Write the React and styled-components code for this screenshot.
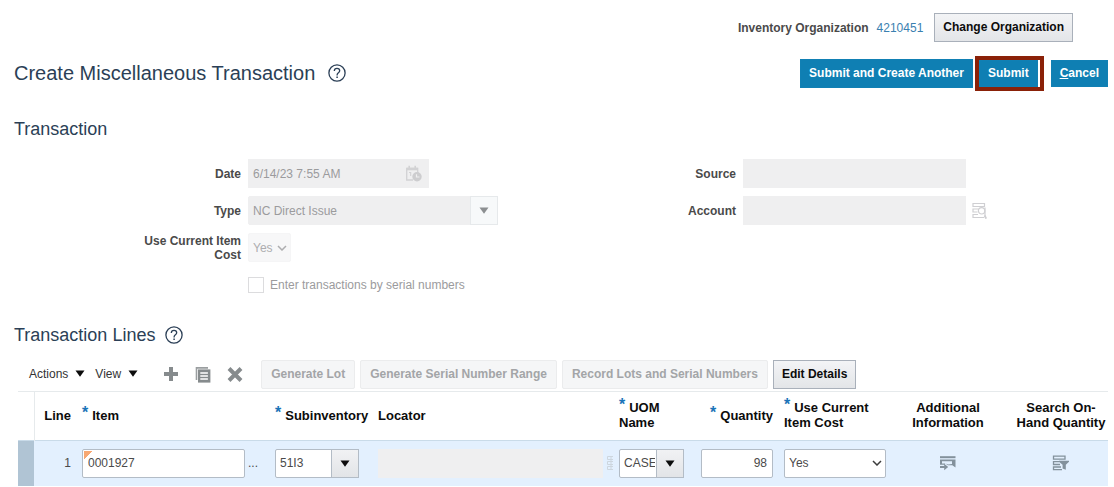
import React from "react";
import styled, { createGlobalStyle } from "styled-components";

const GlobalStyle = createGlobalStyle`
  *, *::before, *::after { box-sizing: border-box; }
  body { margin: 0; background: #fff; }
  body, button, input, select {
    font-family: "Liberation Sans", Arial, sans-serif;
    font-size: 12px;
    color: #4a4a4a;
  }
  h1, h2 { margin: 0; font-weight: 400; color: #2b3f56; }
`;

const Page = styled.main`
  padding: 13px 6px 0 14px;
`;

const OrgBar = styled.div`
  display: flex;
  justify-content: flex-end;
  align-items: center;
  padding-right: 35px;
  height: 29px;
`;

const OrgLabel = styled.span`
  font-weight: 700;
`;

const OrgLink = styled.a`
  margin: 0 11px 0 8px;
  color: #3a80b0;
  text-decoration: none;
`;

const Button = styled.button`
  height: 29px;
  padding: 0 ${(p) => (p.disabled ? "9px" : "8px")} 2px;
  border: 1px solid ${(p) => (p.disabled ? "#ebeced" : "#a9b0ba")};
  border-radius: ${(p) => (p.disabled ? "2px" : "0")};
  background: ${(p) => (p.disabled ? "#f5f6f7" : "linear-gradient(#f3f4f6, #e3e5e8)")};
  color: ${(p) => (p.disabled ? "#a3a5a7" : "#0c0c0c")};
  font-weight: 700;
  white-space: nowrap;
`;

const TitleBar = styled.header`
  display: flex;
  justify-content: space-between;
  align-items: center;
  height: 36px;
  margin-top: 13px;
`;

const Heading = styled.div`
  display: flex;
  align-items: center;
  gap: ${(p) => (p.$section ? "10px" : "13px")};
  height: 24px;

  h1 { font-size: 20px; }
  h2 { font-size: 18px; }
`;

const HelpButton = styled.button`
  display: flex;
  padding: 0;
  border: 0;
  background: none;
`;

const TitleActions = styled.div`
  display: flex;
  align-items: center;
`;

const PrimaryButton = styled.button`
  height: ${(p) => (p.$compact ? "27px" : "29px")};
  padding: 0 8px;
  border: 1px solid #1180b4;
  background: #0f7fb3;
  color: #fff;
  font-weight: 700;
  white-space: nowrap;
`;

const Highlight = styled.div`
  display: flex;
  margin: 0 7px 0 2px;
  padding-right: 2px;
  border: 4px solid #8a2108;
`;

const Form = styled.form`
  display: grid;
  grid-template-columns: 1fr 1fr;
  padding-right: 104px;
  margin-top: 18px;
`;

const FieldColumn = styled.div`
  display: flex;
  flex-direction: column;
  gap: 8px;
`;

const Field = styled.div`
  display: grid;
  grid-template-columns: 227px 1fr;
  column-gap: 7px;
  align-items: center;
  min-height: 29px;
`;

const FieldLabel = styled.label`
  justify-self: end;
  max-width: 102px;
  font-weight: 700;
  line-height: 14px;
  text-align: right;
`;

const FieldBody = styled.div`
  display: flex;
  align-items: center;
  gap: 6px;
`;

const DisabledBox = styled.div`
  display: flex;
  align-items: center;
  width: ${(p) => p.$width};
  height: 29px;
  padding-right: 6px;
  background: #efeff0;
`;

const PlainInput = styled.input`
  flex: 1;
  min-width: 0;
  height: 29px;
  padding: 0 5px;
  border: 0;
  background: none;
  color: #9b9b9d;
`;

const SelectWrap = styled.div`
  display: inline-grid;
  width: ${(p) => p.$width};
  height: 29px;
  vertical-align: middle;

  > * { grid-area: 1 / 1; }
`;

const selectLook = {
  plain: { bg: "#fff", border: "#b3bcc6", ink: "#4a4a4a" },
  muted: { bg: "#efeff0", border: "#efeff0", ink: "#9b9b9d" },
  faint: { bg: "#f7f7f8", border: "#f5f5f6", ink: "#adadaf" },
};

const Select = styled.select`
  appearance: none;
  width: 100%;
  height: 29px;
  padding: 0 ${(p) => (p.$arrowBox ? "28px" : "16px")} 0 4px;
  border: 1px solid ${(p) => selectLook[p.$look].border};
  border-radius: 2px;
  background: ${(p) => selectLook[p.$look].bg};
  color: ${(p) => selectLook[p.$look].ink};
  opacity: 1;
`;

const ArrowBox = styled.span`
  display: flex;
  align-items: center;
  justify-content: center;
  justify-self: end;
  width: 28px;
  height: 29px;
  border: 1px solid ${(p) => (p.$muted ? "#e6e9eb" : "#b3bcc6")};
  background: ${(p) => (p.$muted ? "#f7f9fa" : "linear-gradient(#f1f2f4, #e2e4e7)")};
  pointer-events: none;
`;

const ChevronSlot = styled.span`
  display: flex;
  align-items: center;
  justify-self: end;
  padding-right: 4px;
  pointer-events: none;
`;

const CheckLabel = styled.label`
  display: flex;
  align-items: center;
  gap: 6px;
  grid-column: 2;
  color: #9b9b9d;
`;

const Checkbox = styled.input`
  appearance: none;
  width: 16px;
  height: 16px;
  margin: 0;
  border: 1px solid #dcdcde;
  background: #fff;
`;

const SectionHeading = styled(Heading)`
  margin-top: ${(p) => (p.$afterForm ? "24px" : "26px")};
`;

const Toolbar = styled.div`
  display: flex;
  align-items: center;
  height: 29px;
  margin: 13px 0 2px 15px;
`;

const MenuButton = styled.button`
  display: flex;
  align-items: center;
  gap: 7px;
  margin-right: 10px;
  padding: 0 0 2px;
  border: 0;
  background: none;
  color: #333;
`;

const IconTools = styled.div`
  display: flex;
  gap: 16px;
  margin: 0 18px 0 15px;
`;

const IconButton = styled.button`
  display: inline-flex;
  padding: 0;
  border: 0;
  background: none;
  vertical-align: middle;
`;

const ToolbarButtons = styled.div`
  display: flex;
  gap: 5px;
`;

const LinesTable = styled.table`
  width: calc(100% - 4px);
  margin-left: 4px;
  border-collapse: collapse;
  table-layout: fixed;
`;

const Column = styled.col`
  width: ${(p) => p.$width};
`;

const HeadCell = styled.th`
  height: 49px;
  padding: 0 ${(p) => (p.$align === "right" ? "5px" : "0")} 2px ${(p) => (p.$inset || "6px")};
  border-top: 1px solid #e6eaec;
  border-left: ${(p) => (p.$divider ? "1px solid #e6eaec" : "0")};
  color: #0c0c0c;
  font-size: 13px;
  line-height: 15px;
  text-align: ${(p) => p.$align || "left"};
`;

const Required = styled.span`
  margin-right: 4px;
  color: #1b74b8;
  font-size: 16px;
  line-height: 0;
  vertical-align: 2px;
`;

const Cell = styled.td`
  height: 45px;
  padding: 0 ${(p) => (p.$align === "right" ? "5px" : "0")} 0 ${(p) => (p.$inset || "6px")};
  border-top: 1px solid #c9dbe9;
  background: ${(p) => (p.$handle ? "#b0c4d4" : "#e3f0fe")};
  text-align: ${(p) => p.$align || "left"};
  white-space: nowrap;
`;

const CellContent = styled.div`
  display: flex;
  align-items: center;
  gap: 3px;
`;

const CellInput = styled.input`
  width: ${(p) => p.$width};
  height: 29px;
  padding: 0 5px;
  border: 1px solid #b3bcc6;
  border-radius: 2px;
  background: ${(p) =>
    p.$changed ? "linear-gradient(135deg, #f7a873 6px, transparent 6px) 1px 1px no-repeat, #fff" : "#fff"};
  text-align: ${(p) => (p.$number ? "right" : "left")};
`;

const LocatorInput = styled.input`
  flex: 1;
  min-width: 0;
  height: 29px;
  border: 0;
  background: #efeff0;
`;

function HelpIcon() {
  return (
    <svg width="18" height="18" viewBox="0 0 18 18" fill="none" stroke="#2b3f56" aria-hidden="true">
      <circle cx="9" cy="9" r="8.1" strokeWidth="1.3" />
      <path d="M6.3 7.1C6.3 5.4 7.4 4.4 9 4.4s2.7 1 2.7 2.4c0 2-2.6 2-2.6 4.1v.5" strokeWidth="1.3" />
      <path d="M9.1 12.5v1.5" strokeWidth="1.5" />
    </svg>
  );
}

function Triangle({ color = "#0c0c0c" }) {
  return (
    <svg width="10" height="7" viewBox="0 0 10 7" aria-hidden="true">
      <path d="M0.5 0.5h9L5 6.8z" fill={color} />
    </svg>
  );
}

function Chevron({ color }) {
  return (
    <svg width="10" height="6" viewBox="0 0 10 6" fill="none" stroke={color} strokeWidth="1.5" aria-hidden="true">
      <path d="M1 1l4 4 4-4" />
    </svg>
  );
}

function DateTimeIcon() {
  return (
    <svg width="18" height="18" viewBox="0 0 18 18" fill="none" stroke="#d2d2d4" aria-hidden="true">
      <path d="M8 15H1.7V3.5h11V8" strokeWidth="1.3" />
      <path d="M1.7 4h11" strokeWidth="2.6" />
      <path d="M4.2 0.8v3M10.2 0.8v3" strokeWidth="1.6" />
      <path d="M4 7.5h1.7V11" strokeWidth="1.1" />
      <circle cx="12" cy="11.8" r="4.7" fill="#cdcdcf" stroke="none" />
      <path d="M11.5 9.3V12h3" stroke="#efeff0" strokeWidth="1.2" />
    </svg>
  );
}

function LookupIcon() {
  return (
    <svg width="16" height="18" viewBox="0 0 16 18" fill="none" stroke="#cfcfd2" strokeWidth="1.2" aria-hidden="true">
      <path d="M1 1.5h11.5v3H1zM6.5 7H1v3h4.5M6 12.5H1v3h11" />
      <circle cx="9.6" cy="8.8" r="3.2" />
      <path d="M13 5.5v8.5" />
      <path d="M12.6 13.5l1.6 3.2" strokeWidth="1.9" />
    </svg>
  );
}

function ClippedLookupIcon() {
  return (
    <svg width="7" height="16" viewBox="0 0 7 16" fill="none" stroke="#cdd6de" aria-hidden="true">
      <path d="M7 1.5H1.5v3H7M7 6.5H1.5v3H7M7 11.5H1.5v3H7M5 1.5v13" />
    </svg>
  );
}

function AddIcon() {
  return (
    <svg width="16" height="16" viewBox="0 0 16 16" aria-hidden="true">
      <path d="M6 0h4v5h5v4h-5v5H6V9H1V5h5z" fill="#868b8d" />
    </svg>
  );
}

function DuplicateIcon() {
  return (
    <svg width="16" height="16" viewBox="0 0 16 16" aria-hidden="true">
      <path d="M1.5 13V0.9H13" fill="none" stroke="#9a9ea0" strokeWidth="1.6" />
      <path d="M3 2.4h12.4v13.2H3z" fill="#868b8d" />
      <path d="M5.3 6h7.6M5.3 9h7.6M5.3 12h7.6" stroke="#fff" strokeWidth="1.4" />
    </svg>
  );
}

function DeleteIcon() {
  return (
    <svg width="16" height="16" viewBox="0 0 16 16" aria-hidden="true">
      <path d="M2 1.5l12 12M14 1.5L2 13.5" stroke="#868b8d" strokeWidth="4" />
    </svg>
  );
}

function AdditionalInfoIcon() {
  return (
    <svg width="18" height="16" viewBox="0 0 18 16" fill="#83919c" aria-hidden="true">
      <path d="M1 1.2h15.5v2H1z" />
      <path fillRule="evenodd" d="M1 4.4h15.5v8.2l-3.2-2.3H9L6 8.2v1.6H1zM3 6.2v2.3h3.2l3.3 1 3.5-.6V6.2z" />
      <path d="M1 10.9h4.2V8.7L9.2 12l-4 3.3v-2.2H1z" />
    </svg>
  );
}

function SearchQuantityIcon() {
  return (
    <svg width="18" height="16" viewBox="0 0 18 16" fill="none" stroke="#83919c" strokeWidth="1.3" aria-hidden="true">
      <path d="M1.5 1.2h11.5v3H1.5zM7.5 6.7h-6v2.8h6.5M9 12H1.5v2.6H10" />
      <path d="M7 5.7h10v1.1l-3.2 3v5l-3.2-1.4V9.8L7 6.8z" fill="#83919c" stroke="none" />
    </svg>
  );
}

function BoxedSelect({ id, value, width, muted, label }) {
  return (
    <SelectWrap $width={width}>
      <Select id={id} aria-label={label} $arrowBox $look={muted ? "muted" : "plain"} disabled={muted}>
        <option>{value}</option>
      </Select>
      <ArrowBox $muted={muted}>
        <Triangle color={muted ? "#8c8f91" : "#0c0c0c"} />
      </ArrowBox>
    </SelectWrap>
  );
}

export default function App() {
  return (
    <>
      <GlobalStyle />
      <Page>
        <OrgBar>
          <OrgLabel>Inventory Organization</OrgLabel>
          <OrgLink href="#organization">4210451</OrgLink>
          <Button type="button">Change Organization</Button>
        </OrgBar>

        <TitleBar>
          <Heading>
            <h1>Create Miscellaneous Transaction</h1>
            <HelpButton type="button" aria-label="Help"><HelpIcon /></HelpButton>
          </Heading>
          <TitleActions>
            <PrimaryButton type="button">Submit and Create Another</PrimaryButton>
            <Highlight>
              <PrimaryButton type="button" $compact>Submit</PrimaryButton>
            </Highlight>
            <PrimaryButton type="button" $compact><u>C</u>ancel</PrimaryButton>
          </TitleActions>
        </TitleBar>

        <SectionHeading $section>
          <h2>Transaction</h2>
        </SectionHeading>

        <Form>
          <FieldColumn>
            <Field>
              <FieldLabel htmlFor="date">Date</FieldLabel>
              <DisabledBox $width="181px">
                <PlainInput id="date" defaultValue="6/14/23 7:55 AM" disabled />
                <DateTimeIcon />
              </DisabledBox>
            </Field>
            <Field>
              <FieldLabel htmlFor="type">Type</FieldLabel>
              <BoxedSelect id="type" value="NC Direct Issue" width="250px" muted />
            </Field>
            <Field>
              <FieldLabel htmlFor="cost">Use Current Item Cost</FieldLabel>
              <SelectWrap $width="43px">
                <Select id="cost" $look="faint" disabled>
                  <option>Yes</option>
                </Select>
                <ChevronSlot><Chevron color="#adadaf" /></ChevronSlot>
              </SelectWrap>
            </Field>
            <Field>
              <CheckLabel>
                <Checkbox type="checkbox" disabled />
                Enter transactions by serial numbers
              </CheckLabel>
            </Field>
          </FieldColumn>
          <FieldColumn>
            <Field>
              <FieldLabel htmlFor="source">Source</FieldLabel>
              <DisabledBox $width="223px">
                <PlainInput id="source" disabled />
              </DisabledBox>
            </Field>
            <Field>
              <FieldLabel htmlFor="account">Account</FieldLabel>
              <FieldBody>
                <DisabledBox $width="223px">
                  <PlainInput id="account" disabled />
                </DisabledBox>
                <LookupIcon />
              </FieldBody>
            </Field>
          </FieldColumn>
        </Form>

        <SectionHeading $section $afterForm>
          <h2>Transaction Lines</h2>
          <HelpButton type="button" aria-label="Help"><HelpIcon /></HelpButton>
        </SectionHeading>

        <Toolbar>
          <MenuButton type="button">Actions <Triangle /></MenuButton>
          <MenuButton type="button">View <Triangle /></MenuButton>
          <IconTools>
            <IconButton type="button" aria-label="Add"><AddIcon /></IconButton>
            <IconButton type="button" aria-label="Duplicate"><DuplicateIcon /></IconButton>
            <IconButton type="button" aria-label="Delete"><DeleteIcon /></IconButton>
          </IconTools>
          <ToolbarButtons>
            <Button type="button" disabled>Generate Lot</Button>
            <Button type="button" disabled>Generate Serial Number Range</Button>
            <Button type="button" disabled>Record Lots and Serial Numbers</Button>
            <Button type="button">Edit Details</Button>
          </ToolbarButtons>
        </Toolbar>

        <LinesTable>
          <colgroup>
            <Column $width="16px" />
            <Column $width="42px" />
            <Column $width="193px" />
            <Column $width="103px" />
            <Column />
            <Column $width="82px" />
            <Column $width="83px" />
            <Column $width="114px" />
            <Column $width="112px" />
            <Column $width="104px" />
          </colgroup>
          <thead>
            <tr>
              <HeadCell as="td" />
              <HeadCell $divider $align="right">Line</HeadCell>
              <HeadCell><Required>*</Required>Item</HeadCell>
              <HeadCell><Required>*</Required>Subinventory</HeadCell>
              <HeadCell>Locator</HeadCell>
              <HeadCell><Required>*</Required>UOM<br />Name</HeadCell>
              <HeadCell $align="right"><Required>*</Required>Quantity</HeadCell>
              <HeadCell><Required>*</Required>Use Current<br />Item Cost</HeadCell>
              <HeadCell $align="center" $inset="0">Additional<br />Information</HeadCell>
              <HeadCell $align="center" $inset="10px">Search On-<br />Hand Quantity</HeadCell>
            </tr>
          </thead>
          <tbody>
            <tr>
              <Cell $handle />
              <Cell $align="right">1</Cell>
              <Cell>
                <CellContent>
                  <CellInput $width="163px" $changed aria-label="Item" defaultValue="0001927" />
                  <span>...</span>
                </CellContent>
              </Cell>
              <Cell><BoxedSelect label="Subinventory" value="51I3" width="84px" /></Cell>
              <Cell>
                <CellContent>
                  <LocatorInput aria-label="Locator" disabled />
                  <ClippedLookupIcon />
                </CellContent>
              </Cell>
              <Cell><BoxedSelect label="UOM Name" value="CASE" width="65px" /></Cell>
              <Cell $align="right"><CellInput $width="72px" $number aria-label="Quantity" defaultValue="98" /></Cell>
              <Cell>
                <SelectWrap $width="102px">
                  <Select aria-label="Use Current Item Cost" $look="plain">
                    <option>Yes</option>
                  </Select>
                  <ChevronSlot><Chevron color="#3c3c3c" /></ChevronSlot>
                </SelectWrap>
              </Cell>
              <Cell $align="center" $inset="0">
                <IconButton type="button" aria-label="Additional Information"><AdditionalInfoIcon /></IconButton>
              </Cell>
              <Cell $align="center" $inset="10px">
                <IconButton type="button" aria-label="Search On-Hand Quantity"><SearchQuantityIcon /></IconButton>
              </Cell>
            </tr>
          </tbody>
        </LinesTable>
      </Page>
    </>
  );
}
